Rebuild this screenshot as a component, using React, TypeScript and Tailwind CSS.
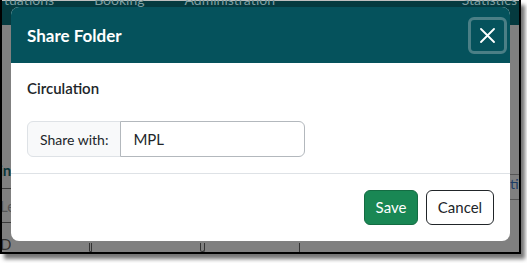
import React from 'react';

const ShareFolderModal = () => {
  return (
    <div className="absolute left-[9px] top-[7px] w-[499px] rounded-lg bg-white font-['Lato',sans-serif] text-[#212529]">
      {/* Header */}
      <div className="flex h-[56px] items-center justify-between rounded-t-lg bg-[#05525c] pl-4 pr-[3px]">
        <h5 className="text-[17px] font-bold leading-none text-white">Share Folder</h5>
        <button className="flex h-[37px] w-[39px] items-center justify-center rounded-md border-[3px] border-[#4b7f86]">
          <svg width="15" height="15" viewBox="0 0 15 15" fill="none">
            <path d="M1 1 L14 14 M14 1 L1 14" stroke="white" strokeWidth="1.8" strokeLinecap="round" />
          </svg>
        </button>
      </div>

      {/* Body */}
      <div className="px-4 pb-4 pt-[14px]">
        <div className="text-[15px] font-semibold leading-[22px]">Circulation</div>
        <div className="mt-[22px] flex h-[36px] w-[278px] text-[15px]">
          <span className="flex items-center whitespace-nowrap rounded-l-md border border-[#dee2e6] bg-[#f8f9fa] px-3 text-[14px]">
            Share with:
          </span>
          <div className="-ml-px flex flex-1 items-center rounded-r-md border border-[#b3b8bd] bg-white px-3">
            MPL
          </div>
        </div>
      </div>

      {/* Footer */}
      <div className="flex justify-end gap-2 border-t border-[#dee2e6] px-4 pb-4 pt-4">
        <button className="h-[35px] w-[54px] rounded-md border border-[#146c43] bg-[#198754] text-[15px] text-white">
          Save
        </button>
        <button className="h-[35px] w-[68px] rounded-md border border-[#212529] bg-white text-[15px]">
          Cancel
        </button>
      </div>
    </div>
  );
};

export default function App() {
  return (
    <div className="h-[263px] w-[527px] overflow-hidden bg-white">
      <div className="h-[254px] w-[521px] border-x-2 border-b-2 border-black shadow-[4px_5px_4px_rgba(0,0,0,0.55)]">
        <div className="relative flex h-full flex-col overflow-hidden bg-[#808080] font-['Lato',sans-serif]">
          {/* Page behind the backdrop */}
          <div className="flex h-[25px] items-start gap-[40px] border-t border-[#bfbfbf] bg-[#053a3f] pl-[2px] text-[14px] leading-none text-[#7d9ea1]">
            <span className="-mt-[8px]">tuations</span>
            <span className="-mt-[8px]">Booking</span>
            <span className="-mt-[8px]">Administration</span>
            <span className="-mt-[8px] ml-auto pr-[2px]">Statistics</span>
          </div>
          <div className="flex flex-1">
            <div className="flex w-[9px] flex-col overflow-hidden text-[15px] leading-none">
              <span className="mt-[138px] -ml-[3px] font-bold text-[#0a3438]">in</span>
              <div className="mt-[10px] h-px w-full bg-[#3a3a3a]" />
              <span className="mt-[10px] -ml-[2px] text-[#555]">Le</span>
              <div className="mt-[8px] h-px w-full bg-[#3a3a3a]" />
              <span className="mt-[14px] -ml-[2px] text-[#333]">De</span>
            </div>
            <div className="flex flex-1 items-end">
              <div className="ml-[78px] h-[9px] w-[3px] rounded-b border-x border-b border-[#333]" />
              <div className="ml-[108px] h-[9px] w-[5px] rounded-b border-x border-b border-[#333]" />
              <div className="ml-[94px] h-[9px] w-px bg-[#333]" />
            </div>
            <div className="flex w-[9px] flex-col overflow-hidden text-[14px] leading-none">
              <div className="mt-[149px] h-px w-full bg-[#555]" />
              <span className="mt-[2px] text-[#1c3c66]">ti</span>
              <div className="mt-[8px] h-px w-full bg-[#555]" />
            </div>
          </div>

          <ShareFolderModal />
        </div>
      </div>
    </div>
  );
}
